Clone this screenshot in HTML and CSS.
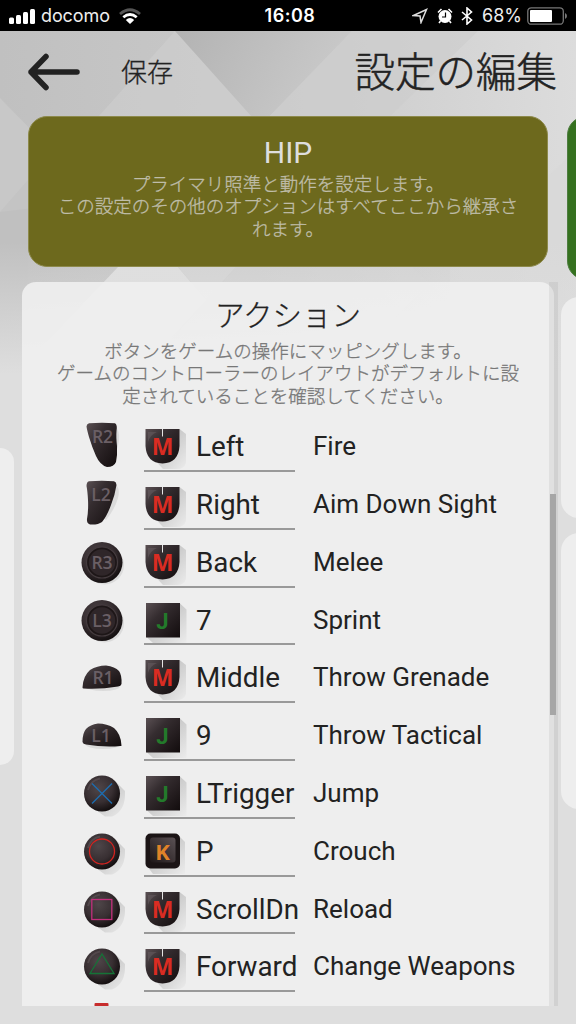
FILE: index.html
```html
<!DOCTYPE html>
<html lang="ja">
<head>
    <meta charset="UTF-8">
    <meta name="viewport" content="width=device-width, initial-scale=1.0">
    <title>設定の編集</title>

    <link rel="stylesheet" href="styles.css">
</head>
<body>
    <!-- icon sprite -->
    <svg class="sprite" width="0" height="0">
        <defs>
            <linearGradient id="dark" x1="0" y1="0" x2="1" y2="1">
                <stop offset="0" stop-color="#5a5053"/>
                <stop offset="0.35" stop-color="#352d30"/>
                <stop offset="1" stop-color="#120c0d"/>
            </linearGradient>
            <radialGradient id="ball" cx="0.4" cy="0.35" r="0.65">
                <stop offset="0" stop-color="#4f4649"/>
                <stop offset="0.6" stop-color="#382f32"/>
                <stop offset="1" stop-color="#151011"/>
            </radialGradient>
            <linearGradient id="shade" x1="0" y1="0" x2="1" y2="1">
                <stop offset="0.4" stop-color="#000" stop-opacity="0.16"/>
                <stop offset="1" stop-color="#000" stop-opacity="0.01"/>
            </linearGradient>
            <linearGradient id="keytop" x1="0" y1="1" x2="1" y2="0">
                <stop offset="0" stop-color="#1d1617"/>
                <stop offset="1" stop-color="#5b5154"/>
            </linearGradient>
        </defs>

        <symbol id="r2" viewBox="0 0 52 57">
            <path d="M36 12q6 3 5 14t-9 24l-8-4z" fill="#000" opacity="0.08"/>
            <path d="M11 9.3Q24 8 37 9.3Q39.6 11 38.5 17Q38 23 39 32Q39.5 41 38 48Q36 53 29 53Q22 51 18 42Q14 33 11 23Q9 16 8.5 12.5Q8.5 10 11 9.3z" fill="url(#dark)"/>
        </symbol>
        <symbol id="l2" viewBox="0 0 52 57">
            <path d="M36 12q7 3 4 14t-12 22l-8-4z" fill="#000" opacity="0.08"/>
            <path d="M11 9.3Q24 8 36 9.3Q38.5 10 38.5 13Q37 23 33 33Q29 44 24 50Q20 53 12 52.5Q8.5 51.5 9 47Q10.5 39 10 28Q9.5 19 8.5 14Q8.5 10 11 9.3z" fill="url(#dark)"/>
        </symbol>
        <symbol id="stick" viewBox="0 0 52 57">
            <circle cx="26.5" cy="35" r="19.5" fill="#000" opacity="0.08"/>
            <circle cx="24" cy="32.5" r="20.5" fill="url(#ball)"/>
            <circle cx="24" cy="32.5" r="15.5" fill="#2f2629" stroke="#443b3e" stroke-width="1.2"/>
            <circle cx="24" cy="32.5" r="14" fill="none" stroke="#1d1617" stroke-width="1.5"/>
        </symbol>
        <symbol id="r1" viewBox="0 0 52 57">
            <ellipse cx="25" cy="41.5" rx="17" ry="4.5" fill="#000" opacity="0.08"/>
            <path d="M4.5 42.5Q5 31 12 25Q19 20.5 28 20.5Q37 21.5 41 26Q44 30 43.5 39Q43 41 40 41.5Q22 44.5 5.5 43.5Q4.5 43.5 4.5 42.5z" fill="url(#dark)"/>
        </symbol>
        <symbol id="l1" viewBox="0 0 52 57">
            <ellipse cx="25" cy="41.5" rx="17" ry="4.5" fill="#000" opacity="0.08"/>
            <path d="M43.5 42.5Q43 31 36 25Q29 20.5 20 20.5Q12 21.5 8 26Q4.5 30 4.5 39Q5 41 8 41.5Q26 44.5 42.5 43Q43.5 43 43.5 42.5z" fill="url(#dark)"/>
        </symbol>
        <symbol id="face" viewBox="0 0 52 57">
            <path d="M37 20l10 10q1 20-13 25.5h-7l-14-10z" fill="url(#shade)"/>
            <circle cx="24" cy="32.5" r="18" fill="url(#ball)"/>
            <path d="M10 29a15 15 0 0 1 12-11.5" fill="none" stroke="#655a5e" stroke-width="2" opacity="0.5"/>
        </symbol>

        <symbol id="mouse" viewBox="0 0 46 57">
            <path d="M35.5 15l6.5 5v29q-2 6-9 6H19L8 43z" fill="url(#shade)"/>
            <path d="M1.5 15h34v17q-1 17-17 17.5q-16-.5-17-17.5z" fill="url(#dark)"/>
            <path d="M4 18h9q-7 3-9 10z" fill="#6a6064" opacity="0.5"/>
            <path d="M18.5 15v7.5" stroke="#e5e5e5" stroke-width="1"/>
        </symbol>
        <symbol id="joy" viewBox="0 0 46 57">
            <path d="M36 15.5l6.500 6v33.5H9L3 49.5z" fill="url(#shade)"/>
            <rect x="2" y="15" width="34" height="34.5" fill="url(#dark)"/>
        </symbol>
        <symbol id="key" viewBox="0 0 46 57">
            <path d="M34 16l7 7v32H9L3 47z" fill="url(#shade)"/>
            <rect x="1.5" y="14.5" width="34.5" height="35" rx="5" fill="#1b1415"/>
            <rect x="6" y="18.5" width="25.5" height="25" rx="3" fill="url(#keytop)"/>
        </symbol>
    </svg>

    <!-- faceted backdrop -->
    <svg class="backdrop" viewBox="0 0 576 440" preserveAspectRatio="none">
        <defs>
            <linearGradient id="base" x1="0" y1="0" x2="1" y2="0">
                <stop offset="0" stop-color="#c0c0c0"/>
                <stop offset="0.5" stop-color="#cacaca"/>
                <stop offset="1" stop-color="#dcdcdc"/>
            </linearGradient>
            <linearGradient id="facet" x1="0" y1="0" x2="1" y2="0.3">
                <stop offset="0" stop-color="#b3b3b3"/>
                <stop offset="1" stop-color="#cacaca"/>
            </linearGradient>
            <linearGradient id="fade" x1="0" y1="0" x2="0" y2="1">
                <stop offset="0.55" stop-color="#dedede" stop-opacity="0"/>
                <stop offset="0.85" stop-color="#dedede"/>
            </linearGradient>
        </defs>
        <rect width="576" height="440" fill="url(#base)"/>
        <path d="M0 98L100 200L0 212z" fill="#c8c8c8"/>
        <path d="M175 31L270 126H90z" fill="#cfcfcf" opacity="0.6"/>
        <path d="M175 31H352L260 126z" fill="url(#facet)"/>
        <path d="M352 31H478L380 126H260z" fill="#cdcdcd" opacity="0.7"/>
        <path d="M28 180L0 212V310H28z" fill="#bfbfbf" opacity="0.5"/>
        <path d="M118 267H178L206 300L150 360H30z" fill="#dfdfdf"/>
        <path d="M178 267H236L206 300z" fill="#d3d3d3"/>
        <path d="M236 267H412L430 284L380 330H180z" fill="#d3d3d3" opacity="0.6"/>
        <path d="M576 150L450 267V300H576z" fill="#d8d8d8" opacity="0.7"/>
        <rect width="576" height="440" fill="url(#fade)"/>
    </svg>

    <div class="status-bar">
        <div class="status-left">
            <svg width="27" height="17" viewBox="0 0 27 17" fill="#fff">
                <rect x="0" y="9.5" width="5" height="6.5" rx="1.5"/>
                <rect x="7" y="7" width="5" height="9" rx="1.5"/>
                <rect x="14" y="4" width="5" height="12" rx="1.5"/>
                <rect x="21" y="1" width="5" height="15" rx="1.5"/>
            </svg>
            <span class="carrier">docomo</span>
            <svg width="22" height="17" viewBox="0 0 22 17" fill="none">
                <path d="M1 6Q11 -2.5 21 6" stroke="#555" stroke-width="2.8"/>
                <path d="M4.3 9.3Q11 3.6 17.7 9.3" stroke="#fff" stroke-width="2.8"/>
                <path d="M6.8 12Q11 8 15.2 12L11 16z" fill="#fff"/>
            </svg>
        </div>
        <div class="clock">16:08</div>
        <div class="status-right">
            <svg width="16" height="16" viewBox="0 0 16 16">
                <path d="M1.5 7.5L14.5 1.5L9 14.5L8 8z" fill="none" stroke="#ddd" stroke-width="1.5"/>
            </svg>
            <svg class="alarm" width="16" height="16" viewBox="0 0 16 16">
                <circle cx="8" cy="8.5" r="6.5" fill="#fff"/>
                <path d="M1 4.5L4.5 1M15 4.5L11.5 1M3.5 13L2 15M12.5 13L14 15" stroke="#fff" stroke-width="1.6"/>
                <path d="M8.5 4.5V9H5" fill="none" stroke="#000" stroke-width="1.2"/>
            </svg>
            <svg class="bluetooth" width="12" height="18" viewBox="0 0 12 18">
                <path d="M1 5L10.5 13L6 17V1L10.5 5L1 13" fill="none" stroke="#fff" stroke-width="1.6"/>
            </svg>
            <span class="percent">68%</span>
            <svg width="41" height="18" viewBox="0 0 41 18">
                <rect x="0.8" y="0.8" width="35.5" height="16.4" rx="3.5" fill="none" stroke="#777" stroke-width="1.3"/>
                <rect x="3" y="3" width="22" height="12" rx="1" fill="#fff"/>
                <path d="M38 6q2 1 2 3t-2 3z" fill="#777"/>
            </svg>
        </div>
    </div>

    <div class="header">
        <svg class="back" width="54" height="40" viewBox="0 0 54 40">
            <path d="M4 20H50M19 4.5L4 20L19 35.5" fill="none" stroke="#222" stroke-width="5.5" stroke-linecap="round" stroke-linejoin="round"/>
        </svg>
        <div class="save">保存</div>
        <h1>設定の編集</h1>
    </div>

    <div class="pages">
        <div class="page-prev">
            <div class="side-card"></div>
        </div>

        <div class="page">
            <div class="mode">
                <h2>HIP</h2>
                <p>プライマリ照準と動作を設定します。<br>この設定のその他のオプションはすべてここから継承さ<br>れます。</p>
            </div>

            <div class="panel">
                <h2>アクション</h2>
                <p>ボタンをゲームの操作にマッピングします。<br>ゲームのコントローラーのレイアウトがデフォルトに設<br>定されていることを確認してください。</p>

                <div class="rows">
                    <div class="row">
                        <svg class="pad"><use href="#r2"/><text x="24.5" y="28.5" class="pad-text">R2</text></svg>
                        <div class="field"><svg class="bind"><use href="#mouse"/><text x="18.5" y="41.3" class="key-text key-m">M</text></svg><span>Left</span></div>
                        <div class="action">Fire</div>
                    </div>
                    <div class="row">
                        <svg class="pad"><use href="#l2"/><text x="23" y="28.5" class="pad-text">L2</text></svg>
                        <div class="field"><svg class="bind"><use href="#mouse"/><text x="18.5" y="41.3" class="key-text key-m">M</text></svg><span>Right</span></div>
                        <div class="action">Aim Down Sight</div>
                    </div>
                    <div class="row">
                        <svg class="pad"><use href="#stick"/><text x="24" y="38.5" class="pad-text">R3</text></svg>
                        <div class="field"><svg class="bind"><use href="#mouse"/><text x="18.5" y="41.3" class="key-text key-m">M</text></svg><span>Back</span></div>
                        <div class="action">Melee</div>
                    </div>
                    <div class="row">
                        <svg class="pad"><use href="#stick"/><text x="24" y="38.5" class="pad-text">L3</text></svg>
                        <div class="field"><svg class="bind"><use href="#joy"/><text x="18.5" y="40.5" class="key-text key-j">J</text></svg><span>7</span></div>
                        <div class="action">Sprint</div>
                    </div>
                    <div class="row">
                        <svg class="pad"><use href="#r1"/><text x="25" y="38.5" class="pad-text">R1</text></svg>
                        <div class="field"><svg class="bind"><use href="#mouse"/><text x="18.5" y="41.3" class="key-text key-m">M</text></svg><span>Middle</span></div>
                        <div class="action">Throw Grenade</div>
                    </div>
                    <div class="row">
                        <svg class="pad"><use href="#l1"/><text x="23" y="38.5" class="pad-text">L1</text></svg>
                        <div class="field"><svg class="bind"><use href="#joy"/><text x="18.5" y="40.5" class="key-text key-j">J</text></svg><span>9</span></div>
                        <div class="action">Throw Tactical</div>
                    </div>
                    <div class="row">
                        <svg class="pad"><use href="#face"/><path class="mark" d="M14 22.5L34 42.5M34 22.5L14 42.5" stroke="#1d6db0"/></svg>
                        <div class="field"><svg class="bind"><use href="#joy"/><text x="18.5" y="40.5" class="key-text key-j">J</text></svg><span>LTrigger</span></div>
                        <div class="action">Jump</div>
                    </div>
                    <div class="row">
                        <svg class="pad"><use href="#face"/><circle class="mark" cx="24" cy="32.5" r="12.5" stroke="#d2231f"/></svg>
                        <div class="field"><svg class="bind"><use href="#key"/><text x="18.5" y="40.8" class="key-text key-k">K</text></svg><span>P</span></div>
                        <div class="action">Crouch</div>
                    </div>
                    <div class="row">
                        <svg class="pad"><use href="#face"/><rect class="mark" x="13.8" y="22.5" width="20" height="20" stroke="#c22f7c"/></svg>
                        <div class="field"><svg class="bind"><use href="#mouse"/><text x="18.5" y="41.3" class="key-text key-m">M</text></svg><span>ScrollDn</span></div>
                        <div class="action">Reload</div>
                    </div>
                    <div class="row">
                        <svg class="pad"><use href="#face"/><path class="mark" d="M24 20L36 39.5H12z" stroke="#157337"/></svg>
                        <div class="field"><svg class="bind"><use href="#mouse"/><text x="18.5" y="41.3" class="key-text key-m">M</text></svg><span>Forward</span></div>
                        <div class="action">Change Weapons</div>
                    </div>
                    <div class="row">
                        <svg class="pad"><rect x="16.5" y="11" width="14" height="14" rx="1" fill="#c72c2c"/></svg>
                    </div>
                </div>
            </div>

            <div class="scroll-track"><div class="scroll-thumb"></div></div>
        </div>

        <div class="page-next">
            <div class="mode-next"></div>
            <div class="side-card small"></div>
            <div class="side-card large"></div>
        </div>
    </div>
</body>
</html>
```
FILE: styles.css
```css
* {
    box-sizing: border-box;
}

body {
    margin: 0;
    width: 576px;
    height: 1024px;
    overflow: hidden;
    position: relative;
    display: flex;
    flex-direction: column;
    background-color: #dedede;
    color: #222;
    font-family: Roboto, "Noto Sans CJK JP", sans-serif;
}

h1, h2, p {
    margin: 0;
    font-weight: 300;
    -webkit-text-stroke: 0.3px;
}

svg {
    display: block;
    flex-shrink: 0;
}

.sprite {
    position: absolute;
}

.backdrop {
    position: absolute;
    top: 0;
    left: 0;
    width: 576px;
    height: 440px;
    z-index: -1;
}

/* status bar */
.status-bar {
    height: 31px;
    display: grid;
    grid-template-columns: 1fr auto 1fr;
    align-items: center;
    padding: 1px 8px 0 9px;
    background-color: #000;
    color: #fff;
    font-family: Inter, sans-serif;
    font-size: 18px;
    line-height: 30px;
    flex-shrink: 0;
}

.status-left, .status-right {
    display: flex;
    align-items: center;
}

.status-right {
    justify-content: flex-end;
}

.carrier {
    width: 70px;
    margin: 0 8px 0 5px;
    color: #eee;
    letter-spacing: -0.1px;
}

.clock {
    padding-left: 3px;
    font-weight: 600;
    font-size: 18px;
    letter-spacing: 0.5px;
}

.alarm {
    margin-left: 9px;
}

.bluetooth {
    margin-left: 8px;
}

.percent {
    margin: 0 5px 0 9px;
    color: #eee;
}

/* header */
.header {
    height: 85px;
    display: flex;
    align-items: center;
    padding: 0 19px 4px 27px;
    flex-shrink: 0;
}

.save {
    margin: -3px 0 0 40px;
    font-size: 26px;
    font-weight: 300;
    -webkit-text-stroke: 0.3px;
}

h1 {
    margin-left: auto;
    padding-top: 2px;
    font-size: 40.5px;
    line-height: 60px;
    -webkit-text-stroke: 0.5px;
}

/* pages */
.pages {
    flex: 1;
    min-height: 0;
    display: flex;
    overflow: hidden;
}

.page-prev {
    width: 22px;
    padding-top: 332px;
    flex-shrink: 0;
}

.page-prev .side-card {
    width: 14px;
    height: 317px;
    border-radius: 0 14px 14px 0;
}

.side-card {
    background-color: #eee;
}

.page {
    width: 532px;
    flex-shrink: 0;
    position: relative;
}

.mode {
    width: 520px;
    height: 151px;
    margin-left: 6px;
    padding-top: 19px;
    border: 1px solid #8d8a4c;
    border-radius: 19px;
    background-color: #6d691d;
    color: #dedede;
    text-align: center;
}

.mode h2 {
    font-size: 30px;
    line-height: 34px;
    font-weight: 400;
    -webkit-text-stroke: 0;
}

.mode p, .panel p {
    font-size: 18.5px;
    line-height: 22.4px;
    white-space: nowrap;
}

.mode p {
    margin-top: 4px;
    color: #bfbda9;
}

.panel {
    height: 724px;
    margin-top: 15px;
    padding-top: 13px;
    overflow: hidden;
    border-radius: 14px 14px 0 0;
    background-color: rgba(240, 240, 240, 0.88);
    text-align: center;
}

.panel h2 {
    font-size: 29.5px;
    line-height: 42px;
}

.panel p {
    margin-top: 4px;
    color: #777;
}

.rows {
    margin-top: 6px;
    padding-left: 56px;
    text-align: left;
}

.row {
    height: 57.8px;
    display: flex;
}

.pad {
    width: 52px;
    height: 57px;
}

.field {
    width: 151px;
    height: 57.8px;
    margin-left: 14px;
    display: flex;
    border-bottom: 2px solid #999;
    font-size: 27.8px;
    line-height: 66px;
    white-space: nowrap;
}

.bind {
    width: 46px;
    height: 57px;
}

.field span {
    margin-left: 6px;
}

.action {
    margin-left: 18px;
    font-size: 26px;
    line-height: 64px;
    white-space: nowrap;
}

/* icon parts */
.pad-text {
    font-family: "Open Sans", sans-serif;
    font-size: 17.5px;
    font-weight: 600;
    text-anchor: middle;
    fill: #6a5f65;
}

.key-text {
    font-family: "Open Sans", sans-serif;
    font-size: 23px;
    font-weight: 700;
    text-anchor: middle;
}

.key-m {
    fill: #d92c22;
}

.key-j {
    fill: #237a2b;
    font-family: Roboto, sans-serif;
    font-size: 22px;
}

.key-k {
    fill: #e08328;
    font-size: 22px;
}

.mark {
    fill: none;
    stroke-width: 1.3;
}

/* scrollbar lies over the panel edge */
.scroll-track {
    position: absolute;
    top: 166px;
    left: 527px;
    width: 9px;
    height: 724px;
    padding: 212px 2px 0 1px;
    background-color: rgba(0, 0, 0, 0.055);
}

.scroll-thumb {
    width: 6px;
    height: 221px;
    background-color: #a6a6a6;
}

/* next page peeks in from the right */
.page-next {
    width: 60px;
    margin-left: 7px;
    flex-shrink: 0;
}

.mode-next {
    height: 164px;
    margin-left: 6px;
    border: 1px solid #4e7d40;
    border-radius: 19px;
    background-color: #35711f;
}

.small {
    height: 221px;
    margin-top: 17px;
    border-radius: 18px;
}

.large {
    height: 276px;
    margin-top: 15px;
    border-radius: 18px;
}
```
